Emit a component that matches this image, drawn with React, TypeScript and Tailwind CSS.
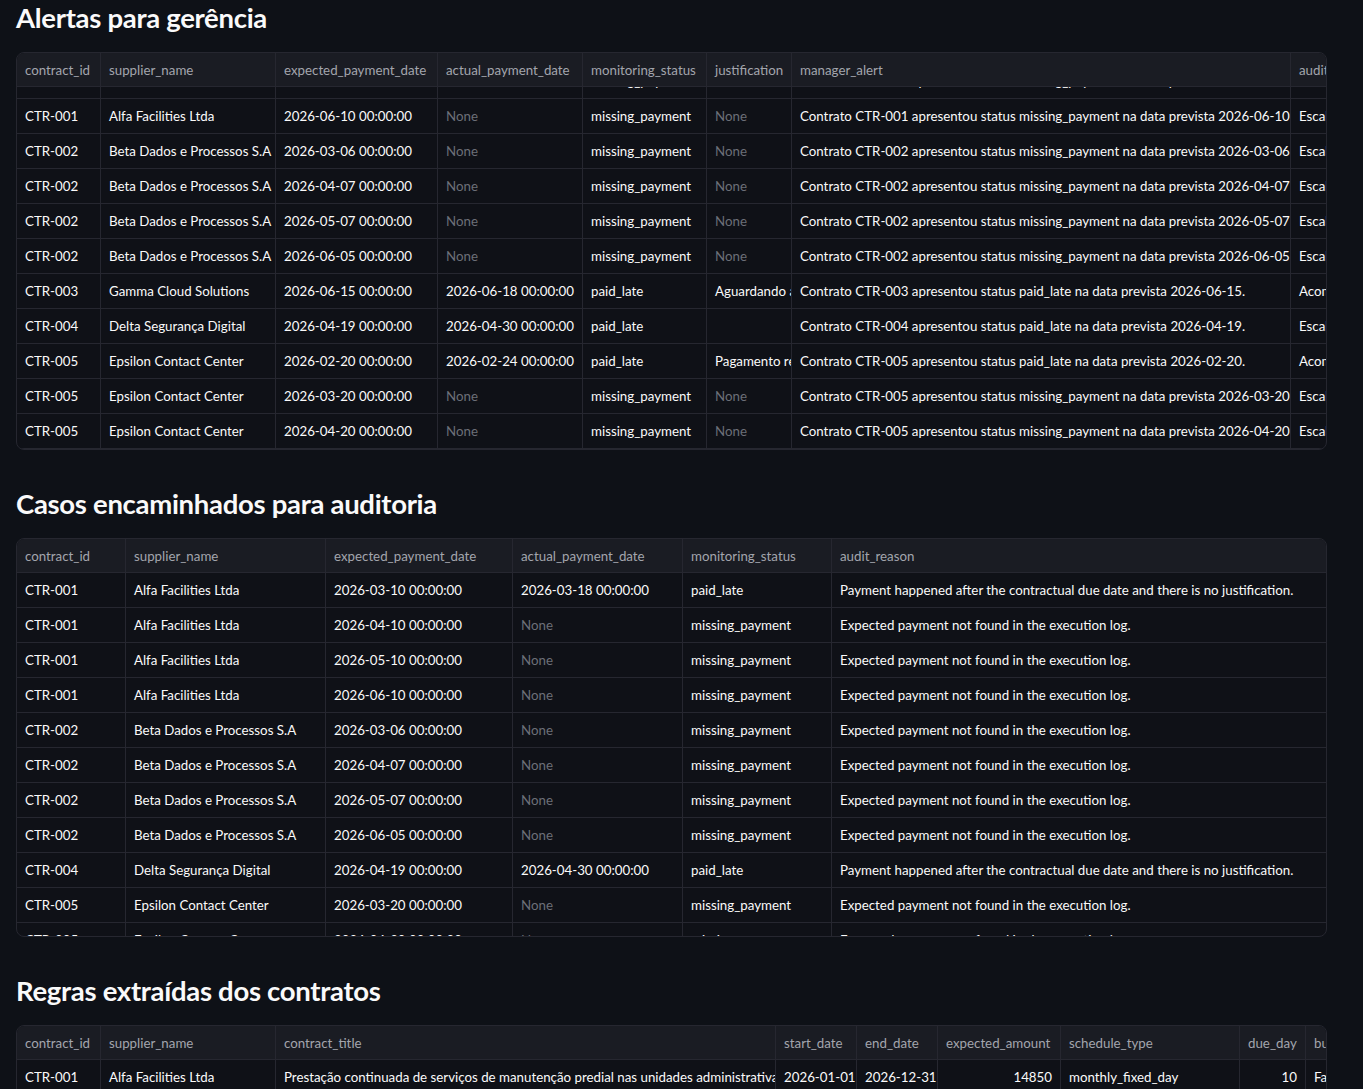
type Col = { name: string; w: number; right?: boolean };
type Row = (string | null)[];

function DataTable({ cols, rows, height, scroll = 0 }: { cols: Col[]; rows: Row[]; height: number; scroll?: number }) {
  return (
    <div className="w-[1311px] overflow-hidden rounded-lg border border-[#262730] bg-[#0f1117]" style={{ height }}>
      <div className="flex h-[34px] border-b border-[#262730] bg-[#1a1c23] whitespace-nowrap">
        {cols.map((c, i) => (
          <div key={i} className="shrink-0 overflow-hidden border-r border-[#262730] px-2 leading-[34px] text-[#a3a5ad]" style={{ width: c.w }}>
            {c.name}
          </div>
        ))}
      </div>
      <div className="overflow-hidden">
        <div style={{ marginTop: -scroll }}>
          {rows.map((r, ri) => (
            <div key={ri} className="flex h-[35px] border-b border-[#262730] whitespace-nowrap">
              {cols.map((c, i) => (
                <div
                  key={i}
                  className={`shrink-0 overflow-hidden border-r border-[#262730] px-2 leading-[34px] ${r[i] === null ? "text-[#6c6f78]" : "text-[#fafafa]"} ${c.right ? "text-right" : ""}`}
                  style={{ width: c.w }}
                >
                  {r[i] === null ? "None" : r[i]}
                </div>
              ))}
            </div>
          ))}
        </div>
      </div>
    </div>
  );
}

const alertCols: Col[] = [
  { name: "contract_id", w: 84 },
  { name: "supplier_name", w: 175 },
  { name: "expected_payment_date", w: 162 },
  { name: "actual_payment_date", w: 145 },
  { name: "monitoring_status", w: 124 },
  { name: "justification", w: 85 },
  { name: "manager_alert", w: 499 },
  { name: "audit_reason", w: 120 },
];

const msg = (id: string, st: string, d: string) => `Contrato ${id} apresentou status ${st} na data prevista ${d}.`;

const alertRows: Row[] = [
  ["CTR-001", "Alfa Facilities Ltda", "2026-05-10 00:00:00", null, "missing_payment", null, msg("CTR-001", "missing_payment", "2026-05-10"), "Escalar"],
  ["CTR-001", "Alfa Facilities Ltda", "2026-06-10 00:00:00", null, "missing_payment", null, msg("CTR-001", "missing_payment", "2026-06-10"), "Escalar"],
  ["CTR-002", "Beta Dados e Processos S.A", "2026-03-06 00:00:00", null, "missing_payment", null, msg("CTR-002", "missing_payment", "2026-03-06"), "Escalar"],
  ["CTR-002", "Beta Dados e Processos S.A", "2026-04-07 00:00:00", null, "missing_payment", null, msg("CTR-002", "missing_payment", "2026-04-07"), "Escalar"],
  ["CTR-002", "Beta Dados e Processos S.A", "2026-05-07 00:00:00", null, "missing_payment", null, msg("CTR-002", "missing_payment", "2026-05-07"), "Escalar"],
  ["CTR-002", "Beta Dados e Processos S.A", "2026-06-05 00:00:00", null, "missing_payment", null, msg("CTR-002", "missing_payment", "2026-06-05"), "Escalar"],
  ["CTR-003", "Gamma Cloud Solutions", "2026-06-15 00:00:00", "2026-06-18 00:00:00", "paid_late", "Aguardando aprovação", msg("CTR-003", "paid_late", "2026-06-15"), "Acompanhar"],
  ["CTR-004", "Delta Segurança Digital", "2026-04-19 00:00:00", "2026-04-30 00:00:00", "paid_late", "", msg("CTR-004", "paid_late", "2026-04-19"), "Escalar"],
  ["CTR-005", "Epsilon Contact Center", "2026-02-20 00:00:00", "2026-02-24 00:00:00", "paid_late", "Pagamento realizado", msg("CTR-005", "paid_late", "2026-02-20"), "Acompanhar"],
  ["CTR-005", "Epsilon Contact Center", "2026-03-20 00:00:00", null, "missing_payment", null, msg("CTR-005", "missing_payment", "2026-03-20"), "Escalar"],
  ["CTR-005", "Epsilon Contact Center", "2026-04-20 00:00:00", null, "missing_payment", null, msg("CTR-005", "missing_payment", "2026-04-20"), "Escalar"],
];

const auditCols: Col[] = [
  { name: "contract_id", w: 109 },
  { name: "supplier_name", w: 200 },
  { name: "expected_payment_date", w: 187 },
  { name: "actual_payment_date", w: 170 },
  { name: "monitoring_status", w: 149 },
  { name: "audit_reason", w: 496 },
];

const late = "Payment happened after the contractual due date and there is no justification.";
const miss = "Expected payment not found in the execution log.";
const auditRows: Row[] = [
  ["CTR-001", "Alfa Facilities Ltda", "2026-03-10 00:00:00", "2026-03-18 00:00:00", "paid_late", late],
  ["CTR-001", "Alfa Facilities Ltda", "2026-04-10 00:00:00", null, "missing_payment", miss],
  ["CTR-001", "Alfa Facilities Ltda", "2026-05-10 00:00:00", null, "missing_payment", miss],
  ["CTR-001", "Alfa Facilities Ltda", "2026-06-10 00:00:00", null, "missing_payment", miss],
  ["CTR-002", "Beta Dados e Processos S.A", "2026-03-06 00:00:00", null, "missing_payment", miss],
  ["CTR-002", "Beta Dados e Processos S.A", "2026-04-07 00:00:00", null, "missing_payment", miss],
  ["CTR-002", "Beta Dados e Processos S.A", "2026-05-07 00:00:00", null, "missing_payment", miss],
  ["CTR-002", "Beta Dados e Processos S.A", "2026-06-05 00:00:00", null, "missing_payment", miss],
  ["CTR-004", "Delta Segurança Digital", "2026-04-19 00:00:00", "2026-04-30 00:00:00", "paid_late", late],
  ["CTR-005", "Epsilon Contact Center", "2026-03-20 00:00:00", null, "missing_payment", miss],
  ["CTR-005", "Epsilon Contact Center", "2026-04-20 00:00:00", null, "missing_payment", miss],
];

const ruleCols: Col[] = [
  { name: "contract_id", w: 84 },
  { name: "supplier_name", w: 175 },
  { name: "contract_title", w: 500 },
  { name: "start_date", w: 81 },
  { name: "end_date", w: 81 },
  { name: "expected_amount", w: 123, right: true },
  { name: "schedule_type", w: 179 },
  { name: "due_day", w: 66, right: true },
  { name: "business_days", w: 120 },
];

const ruleRows: Row[] = [
  ["CTR-001", "Alfa Facilities Ltda", "Prestação continuada de serviços de manutenção predial nas unidades administrativas", "2026-01-01", "2026-12-31", "14850", "monthly_fixed_day", "10", "False"],
];

export default function App() {
  return (
    <div className="min-h-screen bg-[#0e1117] px-4 text-[13.3px] text-[#fafafa]" style={{ fontFamily: "'Source Sans Pro', Lato, 'Noto Sans', sans-serif" }}>
      <h2 className="pb-[16px] text-[27.5px] font-bold leading-[36px] tracking-[-0.3px]">Alertas para gerência</h2>
      <DataTable cols={alertCols} rows={alertRows} height={398} scroll={23} />
      <h2 className="mt-[36px] pb-[16px] text-[27.5px] font-bold leading-[36px] tracking-[-0.3px]">Casos encaminhados para auditoria</h2>
      <DataTable cols={auditCols} rows={auditRows} height={399} />
      <h2 className="mt-[36px] pb-[16px] text-[27.5px] font-bold leading-[36px] tracking-[-0.3px]">Regras extraídas dos contratos</h2>
      <DataTable cols={ruleCols} rows={ruleRows} height={120} />
    </div>
  );
}
